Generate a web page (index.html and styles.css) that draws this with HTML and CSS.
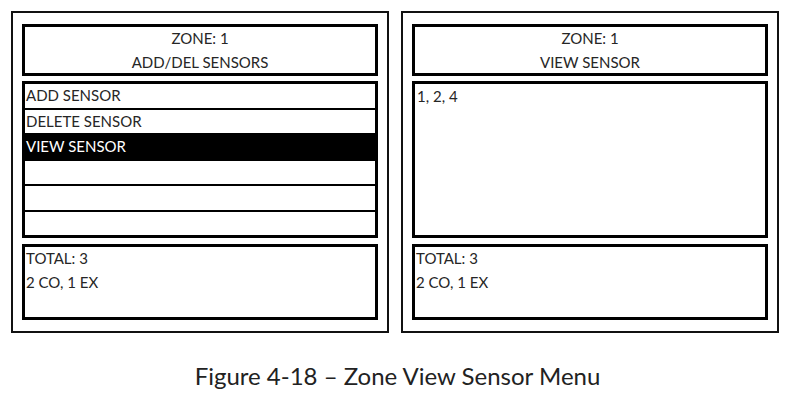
FILE: index.html
```html
<!DOCTYPE html>
<html lang="en">
<head>
  <meta charset="UTF-8" />
  <title>Zone View Sensor Menu</title>
  <link rel="stylesheet" href="styles.css">
</head>
<body>
  <div class="figure">
    <div class="screens">
      <!-- menu screen -->
      <div class="screen">
        <div class="box title">
          <div>ZONE: 1</div>
          <div>ADD/DEL SENSORS</div>
        </div>
        <div class="box menu">
          <div class="row">ADD SENSOR</div>
          <div class="row">DELETE SENSOR</div>
          <div class="row selected">VIEW SENSOR</div>
          <div class="row"></div>
          <div class="row"></div>
          <div class="row"></div>
        </div>
        <div class="box summary">
          <div>TOTAL: 3</div>
          <div>2 CO, 1 EX</div>
        </div>
      </div>

      <!-- view sensor screen -->
      <div class="screen">
        <div class="box title">
          <div>ZONE: 1</div>
          <div>VIEW SENSOR</div>
        </div>
        <div class="box list">
          <div>1, 2, 4</div>
        </div>
        <div class="box summary">
          <div>TOTAL: 3</div>
          <div>2 CO, 1 EX</div>
        </div>
      </div>
    </div>
    <p class="caption">Figure 4-18 – Zone View Sensor Menu</p>
  </div>
</body>
</html>
```
FILE: styles.css
```css
body { margin: 0; background: #fff; font-family: Lato, "Open Sans", sans-serif; color: #262626; }
.figure { padding: 11px 0 0 11px; }
.screens { display: flex; gap: 12px; }
.screen {
  width: 356px;
  height: 298px;
  border: 2px solid #111;
  padding: 11px 9px 9px 9px;
  display: flex;
  flex-direction: column;
}
.box { border: 3px solid #000; box-sizing: border-box; font-size: 15px; }
.title {
  height: 52px;
  text-align: center;
  line-height: 24px;
  display: flex;
  flex-direction: column;
  justify-content: center;
  overflow: visible;
}
.menu { height: 157px; margin-top: 5px; display: flex; flex-direction: column; }
.row { flex: 1; border-bottom: 2px solid #000; padding-left: 1px; line-height: 23px; }
.row:last-child { border-bottom: none; }
.row.selected { background: #000; color: #fff; }
.list { height: 157px; margin-top: 5px; padding: 1px 2px; line-height: 22px; }
.summary { height: 76px; margin-top: 6px; padding: 0 1px; line-height: 24px; }
.summary div:first-child { margin-top: -1px; }
.caption {
  margin: 28px 0 0 0;
  padding-right: 11px;
  text-align: center;
  font-size: 24px;
  color: #222;
}
```
